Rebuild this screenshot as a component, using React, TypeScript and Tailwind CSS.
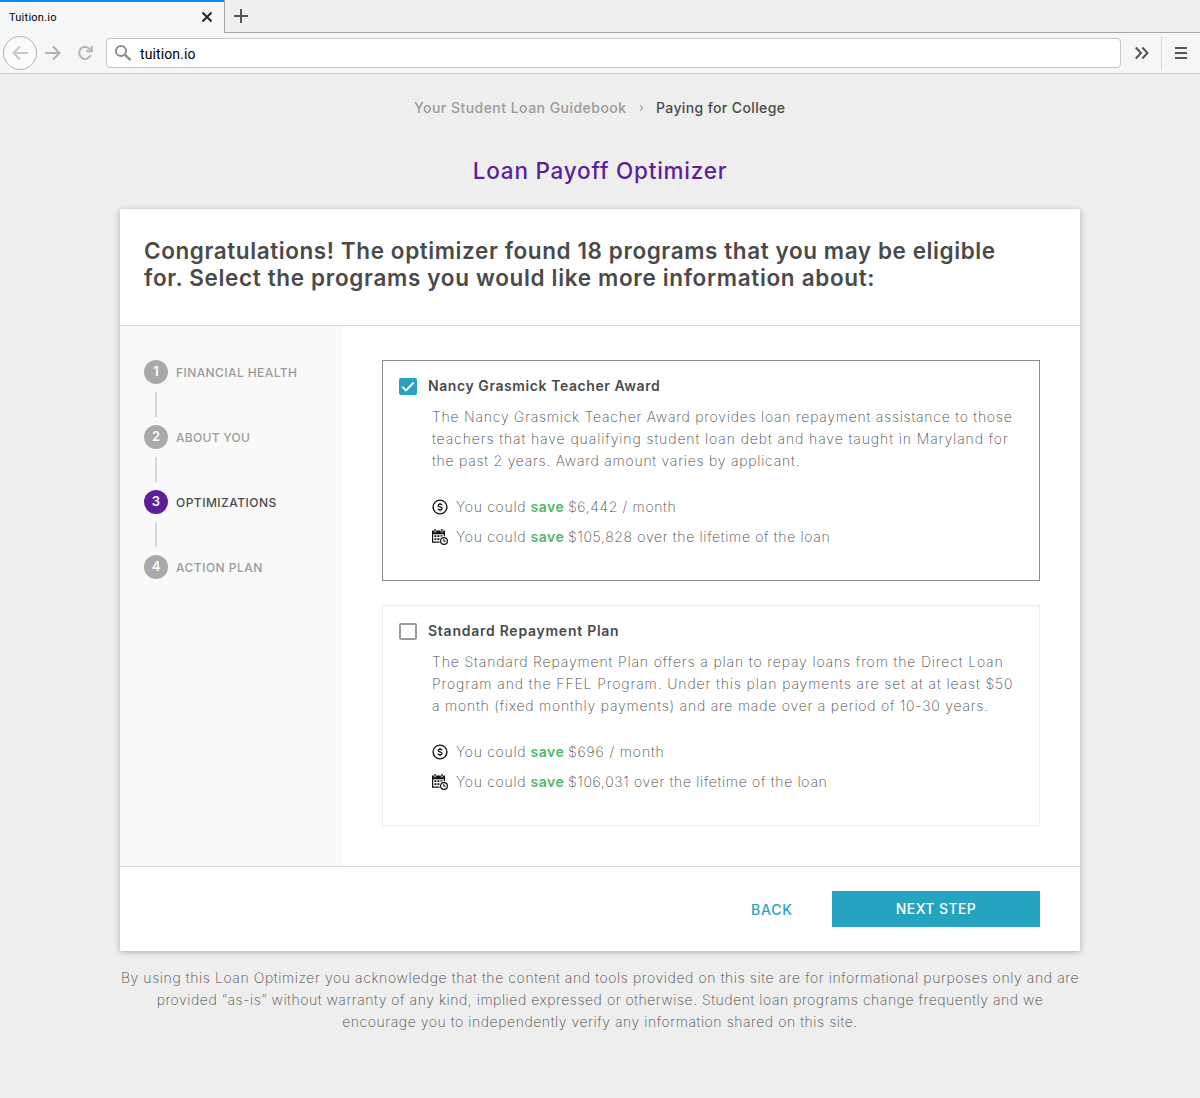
import type { ReactNode } from 'react';

type Line = { text: string; tracking: string };

type Program = {
  title: string;
  titleTracking: string;
  selected: boolean;
  description: Line[];
  monthly: Line;
  lifetime: Line;
};

const programs: Program[] = [
  {
    title: 'Nancy Grasmick Teacher Award',
    titleTracking: 'tracking-[0.58px]',
    selected: true,
    description: [
      { text: 'The Nancy Grasmick Teacher Award provides loan repayment assistance to those', tracking: 'tracking-[0.76px]' },
      { text: 'teachers that have qualifying student loan debt and have taught in Maryland for', tracking: 'tracking-[0.905px]' },
      { text: 'the past 2 years. Award amount varies by applicant.', tracking: 'tracking-[0.76px]' },
    ],
    monthly: { text: '$6,442 / month', tracking: 'tracking-[0.66px]' },
    lifetime: { text: '$105,828 over the lifetime of the loan', tracking: 'tracking-[0.675px]' },
  },
  {
    title: 'Standard Repayment Plan',
    titleTracking: 'tracking-[0.74px]',
    selected: false,
    description: [
      { text: 'The Standard Repayment Plan offers a plan to repay loans from the Direct Loan', tracking: 'tracking-[0.865px]' },
      { text: 'Program and the FFEL Program. Under this plan payments are set at at least $50', tracking: 'tracking-[0.89px]' },
      { text: 'a month (fixed monthly payments) and are made over a period of 10-30 years.', tracking: 'tracking-[0.78px]' },
    ],
    monthly: { text: '$696 / month', tracking: 'tracking-[0.86px]' },
    lifetime: { text: '$106,031 over the lifetime of the loan', tracking: 'tracking-[0.69px]' },
  },
];

const steps = [
  { label: 'FINANCIAL HEALTH', tracking: 'tracking-[0.42px]', active: false },
  { label: 'ABOUT YOU', tracking: 'tracking-[0.31px]', active: false },
  { label: 'OPTIMIZATIONS', tracking: 'tracking-[0.48px]', active: true },
  { label: 'ACTION PLAN', tracking: 'tracking-[0.48px]', active: false },
];

const disclaimer: Line[] = [
  {
    text: 'By using this Loan Optimizer you acknowledge that the content and tools provided on this site are for informational purposes only and are',
    tracking: 'tracking-[0.597px]',
  },
  {
    text: 'provided “as-is” without warranty of any kind, implied expressed or otherwise. Student loan programs change frequently and we',
    tracking: 'tracking-[0.543px]',
  },
  { text: 'encourage you to independently verify any information shared on this site.', tracking: 'tracking-[0.56px]' },
];

function DollarIcon() {
  return (
    <svg className="size-4 shrink-0" viewBox="0 0 16 16" fill="none" stroke="#111" strokeWidth="1.4">
      <circle cx="8" cy="8" r="6.9" />
      <path
        d="M10.1 6.2C9.7 5.4 9 5.1 8 5.1C6.8 5.1 6.1 5.6 6.1 6.4C6.1 8.3 10.1 7.5 10.1 9.5C10.1 10.4 9.2 10.9 8 10.9C6.9 10.9 6.1 10.6 5.8 9.8M8 3.8V5.2M8 10.8V12.2"
        strokeWidth="1.2"
      />
    </svg>
  );
}

function CalendarIcon() {
  return (
    <svg className="size-4 shrink-0" viewBox="0 0 16 16" fill="none">
      <path d="M0 1.6H13V7.3H11.8V5.2H1.2V12.5H7.6V13.7H0Z" fill="#111" />
      <path d="M3 0.2V3.2M10 0.2V3.2" stroke="#fff" strokeWidth="2.4" />
      <path d="M3 0V2.8M10 0V2.8" stroke="#111" strokeWidth="1.3" />
      <path
        d="M2.4 6.3H4.4V7.9H2.4ZM5.4 6.3H7.4V7.9H5.4ZM8.4 6.3H10.4V7.6H8.4ZM2.4 9.3H4.4V10.9H2.4ZM5.4 9.3H7.4V10.9H5.4Z"
        fill="#111"
      />
      <circle cx="12" cy="12" r="3.4" fill="#fff" stroke="#111" strokeWidth="1.2" />
      <path d="M11.8 10V12.2H13.7" stroke="#111" strokeWidth="1" />
    </svg>
  );
}

function Checkbox({ checked }: { checked: boolean }) {
  if (!checked) {
    return <span className="mt-px h-[17px] w-[18px] rounded-[2px] border-2 border-[#9b9b9b] bg-white" />;
  }
  return (
    <span className="mt-px flex h-[17px] w-[18px] items-center justify-center rounded-[2px] bg-[#26a4bf]">
      <svg className="h-[17px] w-[18px]" viewBox="0 0 18 17" fill="none" stroke="#fff" strokeWidth="2">
        <path d="M3.3 8.7L7 12.4L14.7 4.5" />
      </svg>
    </span>
  );
}

function Saving({ icon, line }: { icon: ReactNode; line: Line }) {
  return (
    <div className="flex h-[30px] items-center whitespace-nowrap">
      {icon}
      <span className="ml-2 w-[74.5px] tracking-[0.7px]">You could</span>
      <span className="w-[37.5px] font-semibold tracking-[0.5px] text-[#4fb96a]">save</span>
      <span className={line.tracking}>{line.text}</span>
    </div>
  );
}

function ProgramCard({ program }: { program: Program }) {
  return (
    <article
      className={`h-[221px] border pl-4 pt-[15px] ${program.selected ? 'border-[#8c8c8c]' : 'border-[#ececec]'}`}
    >
      <div className="flex h-5 items-center gap-[11px]">
        <Checkbox checked={program.selected} />
        <h2 className={`text-sm font-semibold text-[#4a4a4a] ${program.titleTracking}`}>{program.title}</h2>
      </div>
      <div className="ml-[33px] mt-[10px] text-sm font-extralight text-[#4a4a4a]">
        {program.description.map((line) => (
          <p key={line.text} className={`whitespace-nowrap leading-[22px] ${line.tracking}`}>
            {line.text}
          </p>
        ))}
        <div className="mt-5">
          <Saving icon={<DollarIcon />} line={program.monthly} />
          <Saving icon={<CalendarIcon />} line={program.lifetime} />
        </div>
      </div>
    </article>
  );
}

function BrowserChrome() {
  return (
    <header className="font-[Roboto,'Noto_Sans',sans-serif] text-black">
      <div className="flex h-[33px]">
        <div className="flex w-[224px] items-center justify-between border-t-2 border-[#0a84ff] bg-[#f5f6f7] pl-[9px] pr-[11px]">
          <span className="pt-px text-[11px] tracking-[0.25px]">Tuition.io</span>
          <svg className="mb-0.5 size-3" viewBox="0 0 12 12" stroke="#222" strokeWidth="1.9">
            <path d="M1.5 1.5L10.5 10.5M10.5 1.5L1.5 10.5" />
          </svg>
        </div>
        <div className="flex flex-1 items-center border-b border-l border-[#a6a6a6] bg-[#efefef] pl-[9px]">
          <svg className="size-[14px]" viewBox="0 0 14 14" stroke="#555" strokeWidth="2">
            <path d="M7 0V14M0 7H14" />
          </svg>
        </div>
      </div>
      <div className="flex h-[41px] items-center border-b border-[#cbcbcb] bg-[#f5f6f7] pl-[3px]">
        <div className="flex size-[34px] items-center justify-center rounded-full border border-[#b5b5b5] bg-[#fbfbfc]">
          <svg className="size-4" viewBox="0 0 16 16" fill="none" stroke="#c6c6c6" strokeWidth="2">
            <path d="M16 8H1.5M8 1.5L1.5 8L8 14.5" />
          </svg>
        </div>
        <svg className="ml-2 size-4" viewBox="0 0 16 16" fill="none" stroke="#b2b2b2" strokeWidth="2">
          <path d="M0 8H14.5M8 1.5L14.5 8L8 14.5" />
        </svg>
        <svg className="ml-4 size-4" viewBox="0 0 16 16" fill="none" stroke="#b2b2b2" strokeWidth="2">
          <path d="M13.2 4.6A6 6 0 1 0 13.7 10.2M14.8 0.8V6.3H9.2" />
        </svg>
        <div className="ml-[13px] flex h-[30px] w-[1015px] items-center rounded-[4px] border border-[#c6c6c6] bg-white pl-[7px]">
          <svg className="size-[18px]" viewBox="0 0 18 18" fill="none" stroke="#8c8c8c" strokeWidth="2">
            <circle cx="7" cy="7" r="5" />
            <path d="M10.7 10.7L16.6 16.2" strokeWidth="2.3" />
          </svg>
          <span className="ml-2 mt-0.5 text-sm leading-4 tracking-[0.1px]">tuition.io</span>
        </div>
        <svg className="ml-[13px] h-[14px] w-4" viewBox="0 0 16 14" fill="none" stroke="#555" strokeWidth="2">
          <path d="M1.8 1.5L7 7L1.8 12.5M8.3 1.5L13.5 7L8.3 12.5" />
        </svg>
        <div className="ml-[11px] h-[34px] w-px bg-[#d8d8d8]" />
        <svg className="ml-[13px] h-3 w-3" viewBox="0 0 12 12" stroke="#555" strokeWidth="2">
          <path d="M0 1H12M0 6H12M0 11H12" />
        </svg>
      </div>
    </header>
  );
}

export default function App() {
  return (
    <div className="h-[1098px] w-[1200px] overflow-hidden bg-[#eeeeee] font-[Inter,'Open_Sans',sans-serif] text-[#4a4a4a]">
      <BrowserChrome />

      <nav className="mt-6 flex h-5 items-center pl-[414px] text-sm font-medium whitespace-nowrap">
        <span className="w-[226px] tracking-[0.47px] text-[#9b9b9b]">Your Student Loan Guidebook</span>
        <svg className="h-[6px] w-[3px]" viewBox="0 0 3 6" fill="none" stroke="#777">
          <path d="M0.4 0.4L2.4 3L0.4 5.6" />
        </svg>
        <span className="ml-[13px] tracking-[0.38px]">Paying for College</span>
      </nav>

      <h1 className="mt-[38px] text-center text-[22.5px] leading-[30px] font-medium tracking-[0.78px] text-[#5c1f99]">
        Loan Payoff Optimizer
      </h1>

      <main className="mx-[120px] mt-[23px] h-[742px] bg-white shadow-[0_1px_6px_rgba(0,0,0,0.28)]">
        <div className="h-[117px] border-b border-[#d8d8d8] pl-6 pt-7 text-[22.5px] leading-[27px] font-semibold whitespace-nowrap">
          <p className="tracking-[0.59px]">Congratulations! The optimizer found 18 programs that you may be eligible</p>
          <p className="tracking-[0.67px]">for. Select the programs you would like more information about:</p>
        </div>

        <div className="flex h-[541px] border-b border-[#d8d8d8]">
          <aside className="w-[222px] bg-[#f9f9f9] pl-6 pt-[34px]">
            {steps.map((step, index) => (
              <div key={step.label}>
                {index > 0 && <div className="my-2 ml-[11px] h-[25px] w-0.5 bg-[#d8d8d8]" />}
                <div className="flex h-6 items-center gap-2">
                  <span
                    className={`flex size-6 items-center justify-center rounded-full text-[13px] font-semibold text-white ${
                      step.active ? 'bg-[#5c1f99]' : 'bg-[#a9a9a9]'
                    }`}
                  >
                    {index + 1}
                  </span>
                  <span
                    className={`pt-px text-xs font-medium whitespace-nowrap ${step.tracking} ${
                      step.active ? 'text-[#4a4a4a]' : 'text-[#9b9b9b]'
                    }`}
                  >
                    {step.label}
                  </span>
                </div>
              </div>
            ))}
          </aside>
          <section className="flex flex-1 flex-col gap-6 px-10 pt-[34px]">
            {programs.map((program) => (
              <ProgramCard key={program.title} program={program} />
            ))}
          </section>
        </div>

        <div className="flex h-[84px] items-center justify-end gap-10 pr-10 text-sm font-medium">
          <button className="w-[41px] pt-0.5 tracking-[0.83px] text-[#26a4bf]">BACK</button>
          <button className="h-9 w-[208px] bg-[#26a4bf] tracking-[0.4px] text-white">NEXT STEP</button>
        </div>
      </main>

      <footer className="mt-4 text-center text-sm leading-[22px] font-extralight whitespace-nowrap">
        {disclaimer.map((line) => (
          <p key={line.text} className={line.tracking}>
            {line.text}
          </p>
        ))}
      </footer>
    </div>
  );
}
